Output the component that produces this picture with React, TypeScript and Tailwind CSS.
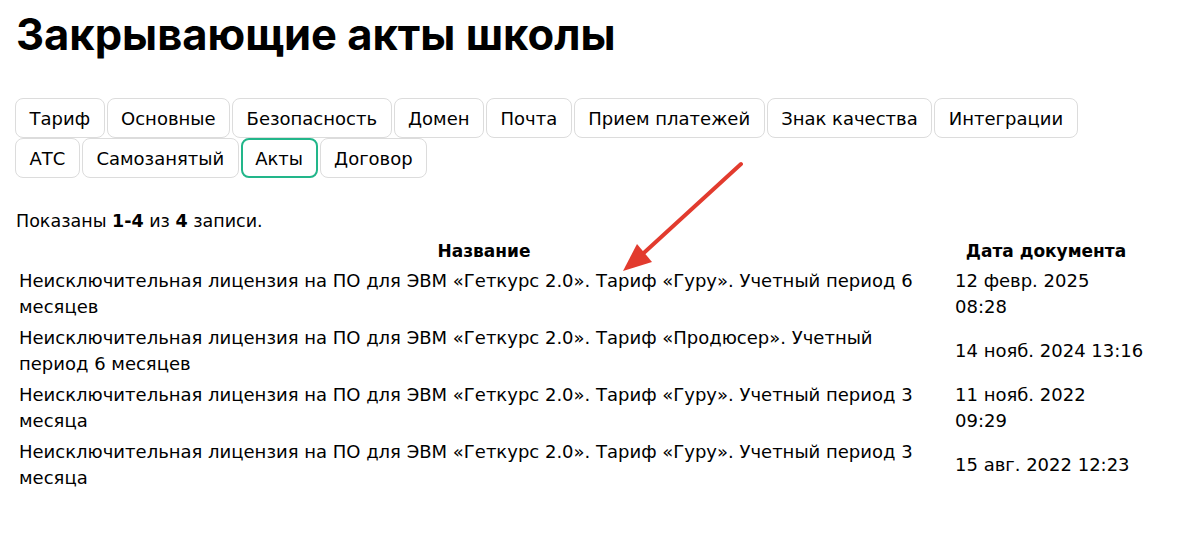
import React from 'react';

const tabs1 = ['Тариф', 'Основные', 'Безопасность', 'Домен', 'Почта', 'Прием платежей', 'Знак качества', 'Интеграции'];
const tabs2 = ['АТС', 'Самозанятый', 'Акты', 'Договор'];

const rows = [
  { name: 'Неисключительная лицензия на ПО для ЭВМ «Геткурс 2.0». Тариф «Гуру». Учетный период 6 месяцев', date: ['12 февр. 2025', '08:28'] },
  { name: 'Неисключительная лицензия на ПО для ЭВМ «Геткурс 2.0». Тариф «Продюсер». Учетный период 6 месяцев', date: ['14 нояб. 2024 13:16'] },
  { name: 'Неисключительная лицензия на ПО для ЭВМ «Геткурс 2.0». Тариф «Гуру». Учетный период 3 месяца', date: ['11 нояб. 2022', '09:29'] },
  { name: 'Неисключительная лицензия на ПО для ЭВМ «Геткурс 2.0». Тариф «Гуру». Учетный период 3 месяца', date: ['15 авг. 2022 12:23'] },
];

function Tab({ label }: { label: string }) {
  const active = label === 'Акты';
  return (
    <div
      className={`h-10 flex items-center rounded-lg text-[18px] text-black ${
        active ? 'border-2 border-[#22b68a] px-[12.5px]' : 'border border-[#dcdcdc] px-[13.5px]'
      }`}
    >
      {label}
    </div>
  );
}

export default function App() {
  return (
    <div className="relative min-h-[549px] bg-white text-black px-[16px] pt-[8px]" style={{ fontFamily: '"DejaVu Sans", sans-serif' }}>
      <h1 className="text-[43.5px] font-bold leading-[52px]" style={{ fontFamily: 'Inter, sans-serif' }}>
        Закрывающие акты школы
      </h1>

      <div className="mt-[38px] flex flex-col -ml-px">
        <div className="flex gap-[2px]">
          {tabs1.map((t) => (
            <Tab key={t} label={t} />
          ))}
        </div>
        <div className="flex gap-[2px]">
          {tabs2.map((t) => (
            <Tab key={t} label={t} />
          ))}
        </div>
      </div>

      <div className="mt-[33px] text-[17.5px] leading-5">
        Показаны <b>1-4</b> из <b>4</b> записи.
      </div>

      <table className="mt-[8px] table-fixed border-collapse text-[18px] leading-[26px]">
        <colgroup>
          <col className="w-[936px]" />
          <col className="w-[194px]" />
        </colgroup>
        <thead>
          <tr>
            <th className="font-bold text-[17px] leading-[24px] pb-[3px]">Название</th>
            <th className="font-bold text-[17px] leading-[24px] pb-[3px] pr-[6px]">Дата документа</th>
          </tr>
        </thead>
        <tbody>
          {rows.map((r, i) => (
            <tr key={i}>
              <td className="pl-[3px] pr-[13px] pt-[2px] pb-[3px] align-middle">{r.name}</td>
              <td className="pl-[3px] pt-[2px] pb-[3px] align-middle">
                {r.date.map((d) => (
                  <div key={d}>{d}</div>
                ))}
              </td>
            </tr>
          ))}
        </tbody>
      </table>

      <svg className="absolute left-0 top-0 pointer-events-none" width="1178" height="549">
        <line x1="741" y1="164" x2="635" y2="261" stroke="#e23b2e" strokeWidth="4" strokeLinecap="round" />
        <polygon points="623,271 637,244 652,262" fill="#e23b2e" />
      </svg>
    </div>
  );
}
